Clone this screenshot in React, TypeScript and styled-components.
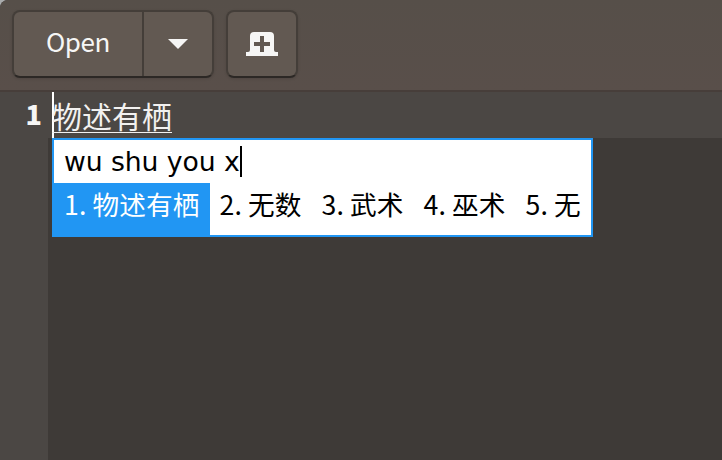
import styled, { createGlobalStyle } from "styled-components";

const GlobalStyle = createGlobalStyle`
    * {
        box-sizing: border-box;
    }
    body {
        margin: 0;
        background-color: #a9abac;
        font-family: "Noto Sans CJK SC", "Noto Sans", sans-serif;
    }
`;

const Window = styled.div`
    display: flex;
    flex-direction: column;
    width: 722px;
    height: 460px;
    overflow: hidden;
    border-top-left-radius: 8px;
    background-color: #3e3a37;
`;

const HeaderBar = styled.header`
    display: flex;
    gap: 12px;
    flex: none;
    height: 92px;
    padding: 10px 12px;
    border-bottom: 2px solid #473e3a;
    background: linear-gradient(#564f49, #594f4a);
`;

const ButtonGroup = styled.div`
    display: flex;
    height: 68px;
    border: 2px solid #443e39;
    border-bottom-color: #2c2825;
    border-radius: 8px;
    background-color: #625952;
    box-shadow: 0 1px 3px rgba(0, 0, 0, 0.12);
`;

const Button = styled.button<{ $width: number }>`
    display: flex;
    align-items: center;
    justify-content: center;
    width: ${(props) => props.$width}px;
    padding: 0;
    border: 0;
    background: none;
    color: #f6f6f5;
    font: 400 26px/40px "Noto Sans CJK SC", sans-serif;
    letter-spacing: -0.4px;
    & + & {
        border-left: 2px solid #443e39;
    }
`;

const Label = styled.span`
    margin-top: -6px;
`;

const Editor = styled.main`
    display: flex;
    flex: 1;
`;

const Gutter = styled.div`
    width: 48px;
    padding-right: 6px;
    background-color: #4b4744;
    color: #f6f6f5;
    text-align: right;
    font: 900 27px/43px "Noto Sans CJK SC", sans-serif;
`;

const Content = styled.div`
    flex: 1;
    position: relative;
`;

const CurrentLine = styled.div`
    display: flex;
    height: 46px;
    padding-left: 4px;
    background-color: #4b4744;
    color: #f2f1f0;
    font-size: 30px;
    line-height: 46px;
`;

const Preedit = styled.span`
    height: 41px;
    border-bottom: 1px solid #f2f1f0;
`;

const Caret = styled.span<{ $height: number; $color: string }>`
    flex: none;
    width: 2px;
    height: ${(props) => props.$height}px;
    margin-right: -2px;
    background-color: ${(props) => props.$color};
`;

const InputPanel = styled.div`
    position: absolute;
    top: 46px;
    left: 4px;
    width: 541px;
    height: 99px;
    border: 2px solid #2196f3;
    background-color: #fff;
    color: #000;
`;

const Composition = styled.div`
    display: flex;
    align-items: center;
    height: 43px;
    padding-left: 10px;
    font: 400 26.67px/43px "DejaVu Sans", sans-serif;
    letter-spacing: -0.08px;
`;

const Candidates = styled.div`
    display: flex;
    height: 52px;
`;

const Candidate = styled.div<{ $selected: boolean }>`
    padding: 0 10px;
    background-color: ${(props) => (props.$selected ? "#2196f3" : "#fff")};
    color: ${(props) => (props.$selected ? "#fff" : "#000")};
    font-size: 26.67px;
    line-height: 42px;
    letter-spacing: 0.1px;
    white-space: nowrap;
`;

const words = ["物述有栖", "无数", "武术", "巫术", "无"];

function App() {
    return <Window>
        <GlobalStyle />
        <HeaderBar>
            <ButtonGroup>
                <Button $width={128}><Label>Open</Label></Button>
                <Button $width={70} aria-label="Recent files">
                    <svg width="20" height="10" viewBox="0 0 20 10">
                        <path d="M0 0h20L10 10z" fill="#f6f6f5" />
                    </svg>
                </Button>
            </ButtonGroup>
            <ButtonGroup>
                <Button $width={68} aria-label="New tab">
                    <svg width="32" height="24" viewBox="0 0 32 24">
                        <path
                            d="M8 0h16q4 0 4 4v14q0 2 2 2h2v4H0v-4h2q2 0 2-2V4q0-4 4-4zM14 4v6H8v4h6v6h4v-6h6v-4h-6V4z"
                            fill="#f6f6f5"
                            fillRule="evenodd"
                        />
                    </svg>
                </Button>
            </ButtonGroup>
        </HeaderBar>
        <Editor>
            <Gutter>1</Gutter>
            <Content>
                <CurrentLine>
                    <Caret $height={46} $color="#fff" />
                    <Preedit>物述有栖</Preedit>
                </CurrentLine>
                <InputPanel>
                    <Composition>
                        wu shu you x
                        <Caret $height={31} $color="#000" />
                    </Composition>
                    <Candidates>
                        {words.map((word, index) => (
                        <Candidate key={word} $selected={index === 0}>
                            {index + 1}. {word}
                        </Candidate>))}
                    </Candidates>
                </InputPanel>
            </Content>
        </Editor>
    </Window>
}
export default App;
